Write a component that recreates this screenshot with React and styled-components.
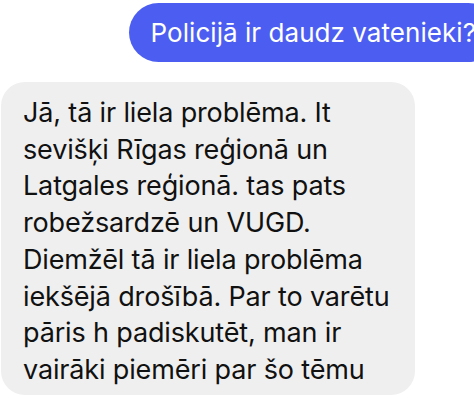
import React from "react";
import styled, { createGlobalStyle } from "styled-components";

const GlobalStyle = createGlobalStyle`
  html, body {
    margin: 0;
    padding: 0;
    background: #ffffff;
  }
  body {
    font-family: "Inter", "Noto Sans", sans-serif;
    -webkit-font-smoothing: antialiased;
  }
`;

const Thread = styled.div`
  width: 474px;
  height: 400px;
  overflow: hidden;
  display: flex;
  flex-direction: column;
  gap: 20px;
  padding-top: 3px;
  box-sizing: border-box;
`;

const OutgoingRow = styled.div`
  display: flex;
  justify-content: flex-end;
  margin-right: -24px;
`;

const OutgoingBubble = styled.div`
  background: #4c5ef1;
  color: #ffffff;
  border-radius: 30px;
  height: 59px;
  padding: 0 22px;
  display: flex;
  align-items: center;
  font-size: 26px;
  letter-spacing: 0.05px;
  white-space: nowrap;
`;

const IncomingRow = styled.div`
  display: flex;
  justify-content: flex-start;
  padding-left: 1px;
`;

const IncomingBubble = styled.div`
  background: #efefef;
  color: #111111;
  border-radius: 24px;
  width: 414px;
  box-sizing: border-box;
  padding: 13px 12px 6px 22px;
  font-size: 27px;
  line-height: 36.7px;
  letter-spacing: -0.15px;
`;

const Line = styled.div`
  white-space: nowrap;
`;

const lines = [
  "Jā, tā ir liela problēma. It",
  "sevišķi Rīgas reģionā un",
  "Latgales reģionā. tas pats",
  "robežsardzē un VUGD.",
  "Diemžēl tā ir liela problēma",
  "iekšējā drošībā. Par to varētu",
  "pāris h padiskutēt, man ir",
  "vairāki piemēri par šo tēmu",
];

const App = () => {
  return (
    <>
      <GlobalStyle />
      <Thread>
        <OutgoingRow>
          <OutgoingBubble>Policijā ir daudz vatenieki?</OutgoingBubble>
        </OutgoingRow>
        <IncomingRow>
          <IncomingBubble>
            {lines.map((line) => (
              <Line key={line}>{line}</Line>
            ))}
          </IncomingBubble>
        </IncomingRow>
      </Thread>
    </>
  );
};

export default App;
